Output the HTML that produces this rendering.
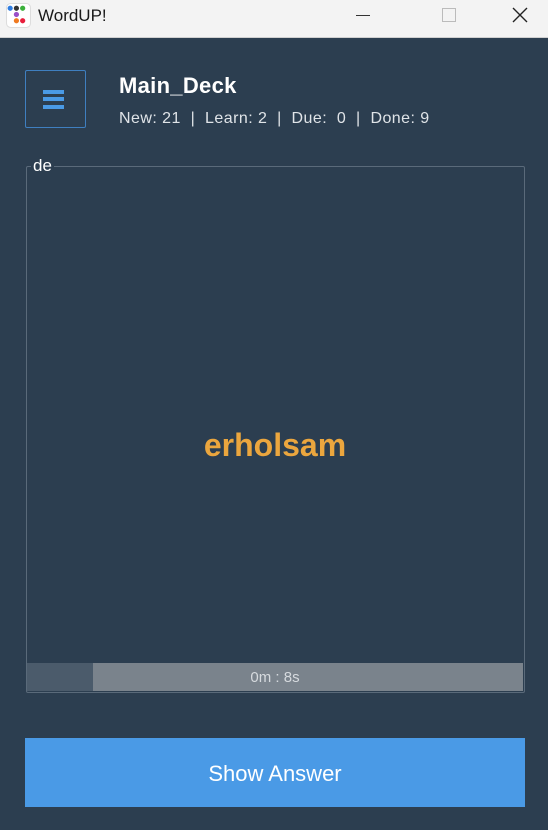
<!DOCTYPE html>
<html><head><style>
body{margin:0;width:548px;height:830px;background:#2c3e50;font-family:"Liberation Sans",sans-serif;position:relative;overflow:hidden}
.tb{position:absolute;left:0;top:0;width:548px;height:37px;background:#f3f3f3;border-bottom:1px solid #d0d0d0}
.a{position:absolute}
</style></head><body>
<div class="tb">
 <svg class="a" style="left:6px;top:3px" width="25" height="25" viewBox="0 0 24 24">
  <rect x="0.5" y="0.5" width="23" height="23" rx="4" fill="#fff" stroke="#ddd"/>
  <circle cx="4" cy="5" r="2.5" fill="#2f7de1"/><circle cx="10" cy="5" r="2.5" fill="#333"/><circle cx="16" cy="5" r="2.5" fill="#3ab03a"/>
  <circle cx="10" cy="11" r="2.5" fill="#9b4fc7"/>
  <circle cx="10" cy="17" r="2.5" fill="#f07a20"/><circle cx="16" cy="17" r="2.5" fill="#e81e3c"/>
 </svg>
 <div class="a" style="left:38px;top:6px;font-size:17px;color:#1a1a1a">WordUP!</div>
 <div class="a" style="left:356px;top:15px;width:14px;height:1px;background:#333"></div>
 <div class="a" style="left:442px;top:8px;width:12px;height:12px;border:1px solid #bbb"></div>
 <svg class="a" style="left:512px;top:7px" width="16" height="16"><path d="M1 1L15 15M15 1L1 15" stroke="#222" stroke-width="1.4"/></svg>
</div>
<div class="a" style="left:25px;top:70px;width:59px;height:56px;border:1px solid #3f7fc0;border-radius:2px"></div>
<div class="a" style="left:43px;top:90px;width:21px;height:4px;background:#4a9ae6"></div>
<div class="a" style="left:43px;top:97px;width:21px;height:4px;background:#4a9ae6"></div>
<div class="a" style="left:43px;top:105px;width:21px;height:4px;background:#4a9ae6"></div>
<div class="a" style="left:119px;top:73px;font-size:22px;font-weight:bold;color:#fff;letter-spacing:0.3px">Main_Deck</div>
<div class="a" style="left:119px;top:110px;font-size:16px;color:#e0e4e8;white-space:pre;letter-spacing:0.45px">New: 21  |  Learn: 2  |  Due:  0  |  Done: 9</div>
<div class="a" style="left:26px;top:166px;width:497px;height:525px;border:1px solid #5a6a7a;border-radius:2px"></div>
<div class="a" style="left:31px;top:156px;font-size:17px;color:#fff;background:#2c3e50;padding:0 2px">de</div>
<div class="a" style="left:0;width:550px;top:427px;text-align:center;font-size:32px;font-weight:bold;color:#eba63e">erholsam</div>
<div class="a" style="left:27px;top:663px;width:66px;height:28px;background:#4b5b6b"></div>
<div class="a" style="left:93px;top:663px;width:430px;height:28px;background:#7a838c"></div>
<div class="a" style="left:27px;width:496px;top:669px;text-align:center;font-size:15px;color:#d6dade">0m : 8s</div>
<div class="a" style="left:25px;top:738px;width:500px;height:69px;background:#4a9ae6;color:#fff;font-size:22px;text-align:center;line-height:71px">Show Answer</div>
</body></html>
